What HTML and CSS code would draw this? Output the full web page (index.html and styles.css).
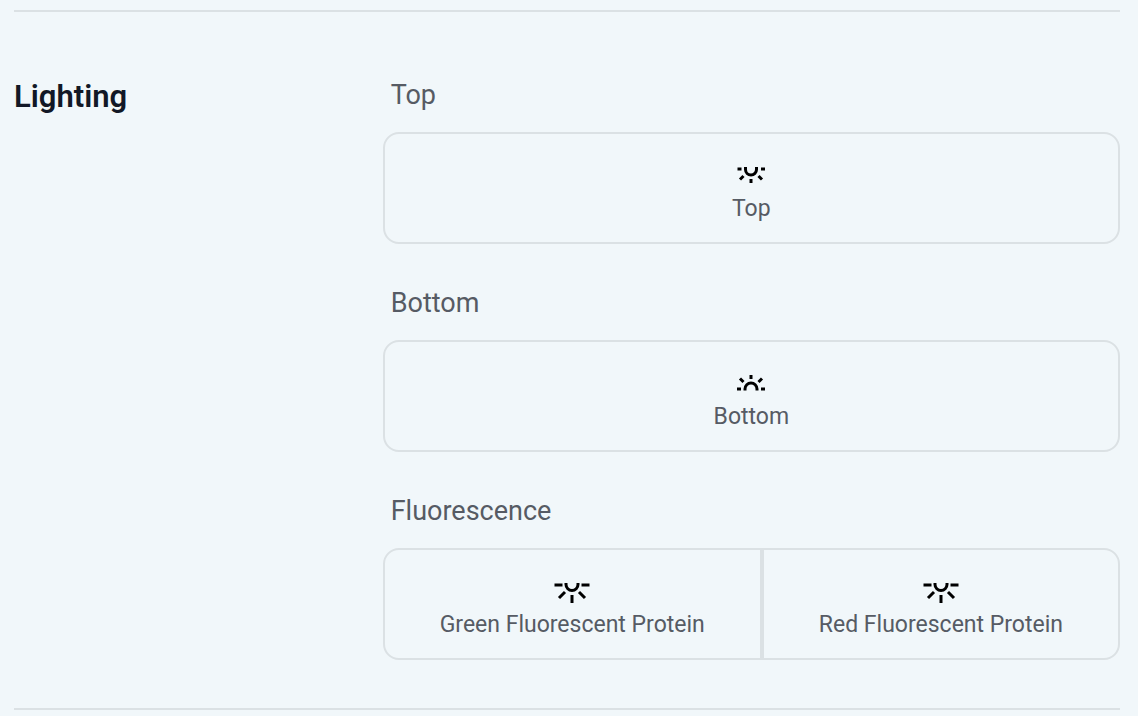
FILE: index.html
```
<!DOCTYPE html>
<html lang="en">
  <head>
    <meta charset="UTF-8" />
    <meta name="viewport" content="width=device-width, initial-scale=1.0" />
    <title>Lighting</title>
    <link rel="stylesheet" href="styles.css" />
  </head>
  <body>
    <section class="lighting">
      <h2 class="title">Lighting</h2>
      <div class="groups">
        <div class="group" role="group" aria-labelledby="top-label">
          <h3 class="group-label" id="top-label">Top</h3>
          <div class="options">
            <button type="button" class="option">
              <svg class="icon" viewBox="0 0 40 36" aria-hidden="true">
                <path d="M6.5 11h4M30 11h4M14.5 9v2.5a5.5 5.5 0 0 0 11 0v-2.5M20 21v4M9 21.5l3.5-3.5M31 21.5l-3.5-3.5" />
              </svg>
              Top
            </button>
          </div>
        </div>
        <div class="group" role="group" aria-labelledby="bottom-label">
          <h3 class="group-label" id="bottom-label">Bottom</h3>
          <div class="options">
            <button type="button" class="option">
              <svg class="icon" viewBox="0 0 40 36" aria-hidden="true">
                <path d="M6 23h4M30 23h4M14 24.5v-1.5a6 6 0 0 1 12 0v1.5M20 9v4M9 12.5l3.5 3.5M31 12.5l-3.5 3.5" />
              </svg>
              Bottom
            </button>
          </div>
        </div>
        <div class="group" role="group" aria-labelledby="fluorescence-label">
          <h3 class="group-label" id="fluorescence-label">Fluorescence</h3>
          <div class="options">
            <button type="button" class="option">
              <svg class="icon" viewBox="0 0 40 36" aria-hidden="true">
                <path d="M2.5 11h8M29.5 11h8M14 9v1.5a6 6 0 0 0 12 0v-1.5M20 21v8M7 24l6-6M33 24l-6-6" />
              </svg>
              Green Fluorescent Protein
            </button>
            <button type="button" class="option">
              <svg class="icon" viewBox="0 0 40 36" aria-hidden="true">
                <path d="M2.5 11h8M29.5 11h8M14 9v1.5a6 6 0 0 0 12 0v-1.5M20 21v8M7 24l6-6M33 24l-6-6" />
              </svg>
              Red Fluorescent Protein
            </button>
          </div>
        </div>
      </div>
    </section>
  </body>
</html>
```
FILE: styles.css
```
* {
  box-sizing: border-box;
}
body {
  margin: 0;
  padding: 10px 18px 0 14px;
  background-color: #f1f7fa;
  color: #565b64;
  font-family: Roboto, "Liberation Sans", sans-serif;
}
.lighting {
  display: grid;
  grid-template-columns: 1fr 2fr;
  padding: 64px 0 48px;
  border-top: 2px solid #dbe1e4;
  border-bottom: 2px solid #dbe1e4;
}
.title {
  margin: 0;
  color: #121826;
  font-size: 31px;
  line-height: 42px;
  font-weight: 600;
}
.groups {
  display: flex;
  flex-direction: column;
  gap: 40px;
}
.group-label {
  margin: 0 0 18px;
  padding: 0 8px;
  font-size: 27px;
  line-height: 38px;
  font-weight: 400;
}
.options {
  display: flex;
}
.option {
  display: flex;
  flex: 1 1 auto;
  flex-direction: column;
  align-items: center;
  padding: 24px 16px 18px;
  border: 2px solid #dbe1e4;
  background-color: transparent;
  color: inherit;
  font-family: inherit;
  font-size: 23px;
  line-height: 30px;
  cursor: pointer;
}
.option:first-child {
  border-top-left-radius: 16px;
  border-bottom-left-radius: 16px;
}
.option:last-child {
  border-top-right-radius: 16px;
  border-bottom-right-radius: 16px;
}
.option:hover {
  background-color: #e7eff3;
}
.icon {
  width: 40px;
  height: 36px;
  fill: none;
  stroke: black;
  stroke-width: 3;
}
```
